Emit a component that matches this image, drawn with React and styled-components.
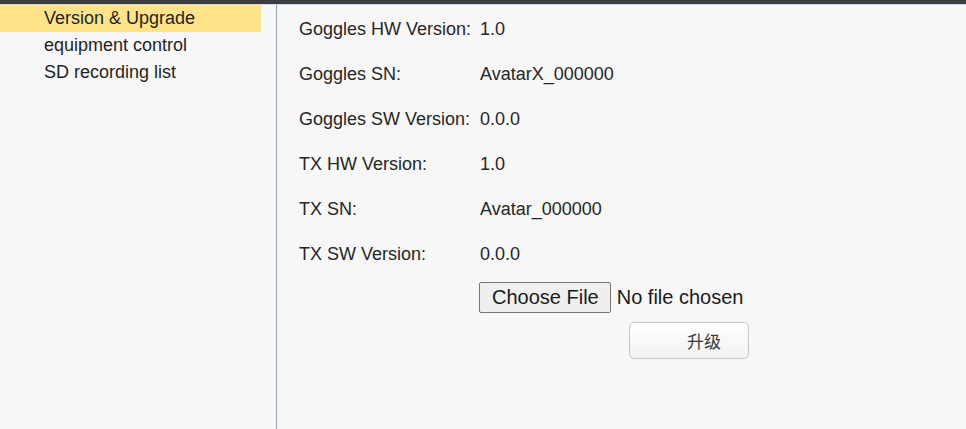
import * as React from 'react';
import styled, { createGlobalStyle } from 'styled-components';

const GlobalStyle = createGlobalStyle`
  html, body {
    margin: 0;
    padding: 0;
    background: #f7f7f7;
  }
  body {
    font-family: "Liberation Sans", Arial, sans-serif;
    color: #1f1f1f;
  }
`;

const TopBar = styled.div`
  height: 4px;
  background: #3b3c3e;
  border-bottom: 1px solid #c9d9ef;
`;

const Layout = styled.div`
  display: flex;
  height: 424px;
`;

const Sidebar = styled.ul`
  width: 276px;
  margin: 0;
  padding: 0;
  list-style: none;
  border-right: 1px solid #97a6c2;
  box-shadow: 1px 0 0 #e6edf7;
`;

const NavItem = styled.li`
  width: 217px;
  height: 27px;
  line-height: 26px;
  padding-left: 44px;
  font-size: 18px;
  background: ${(props) => (props.active ? '#fee38b' : 'transparent')};
`;

const Content = styled.div`
  flex: 1;
  padding: 2px 0 0 22px;
`;

const InfoRow = styled.div`
  display: flex;
  height: 45px;
  align-items: center;
  font-size: 18px;
  color: #262626;
`;

const Label = styled.span`
  width: 181px;
  white-space: nowrap;
`;

const FileRow = styled.div`
  display: flex;
  align-items: center;
  margin: 5px 0 0 180px;
  font-size: 20px;
  color: #1a1a1a;
`;

const FileButton = styled.span`
  display: inline-block;
  height: 29px;
  line-height: 29px;
  padding: 0 11px 0 12px;
  border: 1px solid #767676;
  border-radius: 2px;
  background: #efefef;
  margin-right: 6px;
`;

const UpgradeButton = styled.button`
  display: block;
  width: 120px;
  height: 37px;
  margin: 9px 0 0 330px;
  padding: 0 0 0 30px;
  border: 1px solid #c6c6c6;
  border-radius: 5px;
  background: linear-gradient(#ffffff, #f1f1f1);
  font-family: "Liberation Sans", "Noto Sans CJK SC", sans-serif;
  font-size: 17px;
  color: #3a3a3a;
`;

const rows = [
  ['Goggles HW Version:', '1.0'],
  ['Goggles SN:', 'AvatarX_000000'],
  ['Goggles SW Version:', '0.0.0'],
  ['TX HW Version:', '1.0'],
  ['TX SN:', 'Avatar_000000'],
  ['TX SW Version:', '0.0.0'],
];

const App = () => {
  return (
    <>
      <GlobalStyle />
      <TopBar />
      <Layout>
        <Sidebar>
          <NavItem active>Version &amp; Upgrade</NavItem>
          <NavItem>equipment control</NavItem>
          <NavItem>SD recording list</NavItem>
        </Sidebar>
        <Content>
          {rows.map(([label, value]) => (
            <InfoRow key={label}>
              <Label>{label}</Label>
              <span>{value}</span>
            </InfoRow>
          ))}
          <FileRow>
            <FileButton>Choose File</FileButton>
            <span>No file chosen</span>
          </FileRow>
          <UpgradeButton type="button">升级</UpgradeButton>
        </Content>
      </Layout>
    </>
  );
};

export default App;
